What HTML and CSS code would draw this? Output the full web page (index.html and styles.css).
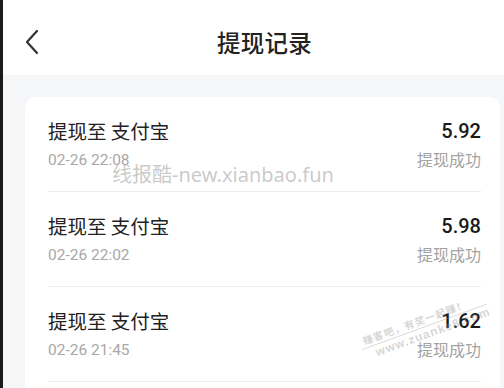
FILE: index.html
```html
<!DOCTYPE html>
<html lang="zh">
<head>
<meta charset="utf-8">
<link rel="stylesheet" href="styles.css">
</head>
<body>
<div class="page">
  <header class="topbar">
    <span class="back">
      <svg width="16" height="26" viewBox="0 0 16 26"><path d="M13 2 L3 13 L13 24" fill="none" stroke="#333" stroke-width="2.2" stroke-linecap="round" stroke-linejoin="round"/></svg>
    </span>
    <h1 class="title">提现记录</h1>
  </header>
  <main class="content">
    <div class="card">
      <div class="row">
        <div class="left">
          <div class="name">提现至 支付宝</div>
          <div class="time">02-26 22:08</div>
        </div>
        <div class="right">
          <div class="amount">5.92</div>
          <div class="status">提现成功</div>
        </div>
      </div>
      <div class="row">
        <div class="left">
          <div class="name">提现至 支付宝</div>
          <div class="time">02-26 22:02</div>
        </div>
        <div class="right">
          <div class="amount">5.98</div>
          <div class="status">提现成功</div>
        </div>
      </div>
      <div class="row">
        <div class="left">
          <div class="name">提现至 支付宝</div>
          <div class="time">02-26 21:45</div>
        </div>
        <div class="right">
          <div class="amount">1.62</div>
          <div class="status">提现成功</div>
        </div>
      </div>
    </div>
  </main>
  <div class="wm1">线报酷-new.xianbao.fun</div>
  <div class="wm2"><div class="wm2-top">赚客吧，有奖一起赚！</div><div class="wm2-bot">www.zuanke8.com</div></div>
</div>
</body>
</html>
```
FILE: styles.css
```css
html, body {
  margin: 0;
  padding: 0;
  background: #f5f6f8;
}
body {
  width: 504px;
  height: 388px;
  overflow: hidden;
  font-family: "Noto Sans CJK SC", "Noto Sans", sans-serif;
}
.page {
  position: relative;
  height: 388px;
  overflow: hidden;
  border-left: 3px solid #1b1b1b;
  background: #f5f6f8;
}
.topbar {
  height: 75px;
  background: #fff;
  display: flex;
  align-items: center;
  justify-content: center;
  position: relative;
}
.back {
  position: absolute;
  left: 21px;
  top: 29px;
  display: block;
  width: 16px;
  height: 26px;
}
.back svg { display: block; }
.title {
  margin: 0;
  margin-left: 22px;
  margin-top: 8px;
  font-size: 23.5px;
  font-weight: 500;
  color: #222;
  letter-spacing: 0.3px;
}
.content {
  padding: 22px 4px 0 22px;
}
.card {
  background: #fff;
  border-radius: 10px;
  padding: 0 19px 40px 23px;
}
.row {
  display: flex;
  justify-content: space-between;
  padding: 21px 0 20px;
  border-bottom: 1px solid #ececec;
}
.name {
  font-size: 19.5px;
  line-height: 26px;
  color: #222;
}
.time {
  margin-top: 5px;
  font-family: "Roboto", "Noto Sans", sans-serif;
  font-size: 15.5px;
  line-height: 22px;
  color: #a8a8a8;
}
.right {
  text-align: right;
}
.amount {
  font-family: "Roboto", "Noto Sans", sans-serif;
  font-weight: 500;
  font-size: 20px;
  line-height: 26px;
  color: #1a1a1a;
}
.status {
  margin-top: 3px;
  font-size: 16px;
  line-height: 24px;
  color: #a3a3a3;
}
.wm1 {
  position: absolute;
  left: 109px;
  top: 161px;
  font-family: "Noto Sans", "Noto Sans CJK SC", sans-serif;
  font-size: 20px;
  line-height: 28px;
  color: rgba(150,150,150,0.5);
  white-space: nowrap;
}
.wm2 {
  position: absolute;
  left: 354px;
  top: 336px;
  transform: rotate(-20deg);
  transform-origin: left top;
  color: rgba(150,150,150,0.4);
  font-size: 10px;
  line-height: 13px;
  white-space: nowrap;
  font-weight: 700;
  letter-spacing: 1px;
}
.wm2-top {
  border-bottom: 1px solid rgba(150,150,150,0.4);
  padding: 0 0 1px 4px;
}
.wm2-bot {
  font-family: "Liberation Sans", sans-serif;
  font-size: 12px;
  line-height: 14px;
  padding-left: 12px;
}
```
